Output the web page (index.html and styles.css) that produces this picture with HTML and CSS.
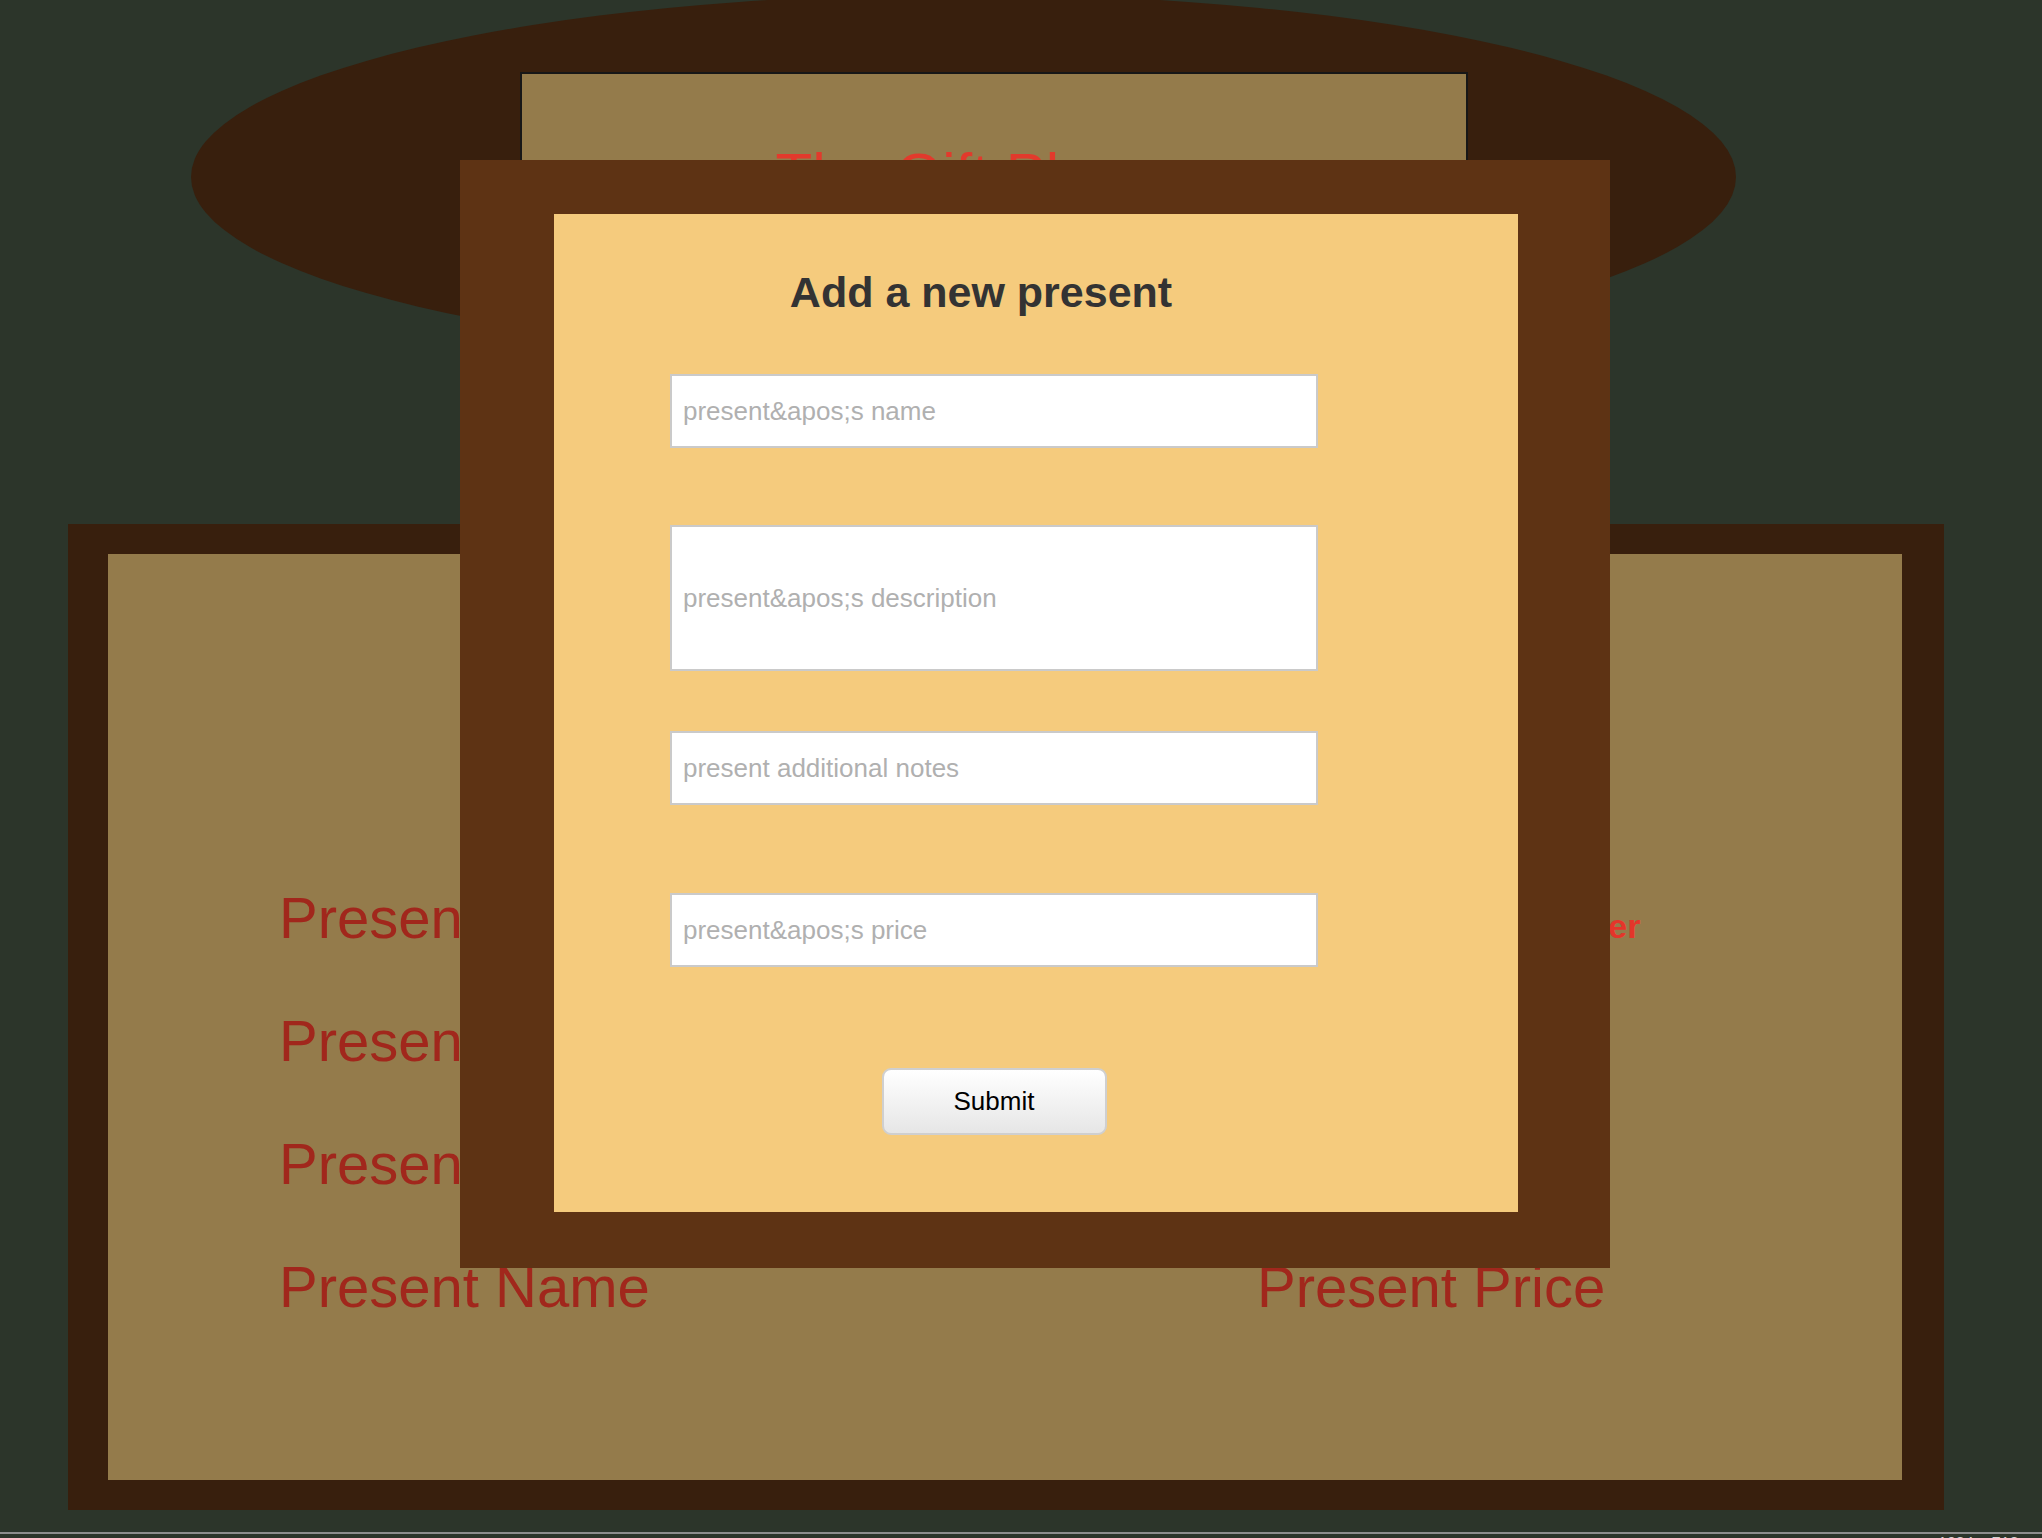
FILE: index.html
```html
<!DOCTYPE html>
<html lang="en">
<head>
<meta charset="utf-8">
<title>Presents</title>
<link rel="stylesheet" href="styles.css">
</head>
<body>
<div class="page">
  <header class="hero">
    <div class="header-box">
      <h1 class="site-title">The Gift Planner</h1>
    </div>
  </header>

  <main class="list-box">
    <div class="list-row">
      <span class="cell-name">Present Name</span>
      <span class="cell-price"></span>
      <span class="cell-action">Reorder</span>
    </div>
    <div class="list-row">
      <span class="cell-name">Present Name</span>
      <span class="cell-price">Present Price</span>
    </div>
    <div class="list-row">
      <span class="cell-name">Present Name</span>
      <span class="cell-price">Present Price</span>
    </div>
    <div class="list-row">
      <span class="cell-name">Present Name</span>
      <span class="cell-price">Present Price</span>
    </div>
  </main>

  <footer class="status-bar">
    <span class="status-text">1934 × 718</span>
  </footer>

  <div class="modal">
    <div class="modal-inner">
      <h2 class="modal-title">Add a new present</h2>
      <form class="present-form">
        <input class="field field-name" type="text" placeholder="present&amp;apos;s name">
        <input class="field field-desc" type="text" placeholder="present&amp;apos;s description">
        <input class="field field-notes" type="text" placeholder="present additional notes">
        <input class="field field-price" type="text" placeholder="present&amp;apos;s price">
        <button class="submit-btn" type="button">Submit</button>
      </form>
    </div>
  </div>
</div>
</body>
</html>
```

FILE: styles.css
```css
html, body {
  margin: 0;
  padding: 0;
  height: 1538px;
  overflow: hidden;
  background: #2c352a;
  font-family: "Liberation Sans", Arial, Helvetica, sans-serif;
}

.page {
  position: relative;
  display: flow-root;
  min-height: 1538px;
}

/* top ellipse header */
.hero {
  box-sizing: border-box;
  margin: -6px 0 0 191px;
  width: 1545px;
  height: 366px;
  padding: 78px 0 0 329px;
  border-radius: 50%;
  background: #381f0d;
}

.header-box {
  box-sizing: border-box;
  width: 948px;
  height: 280px;
  padding-top: 71px;
  background: #947b4b;
  border: 2px solid #171717;
  border-bottom: none;
}

.site-title {
  margin: 0;
  font-size: 60px;
  line-height: 60px;
  font-weight: normal;
  text-align: center;
  color: #e23a2c;
}

/* lower list box */
.list-box {
  box-sizing: border-box;
  margin: 164px 0 0 68px;
  width: 1876px;
  height: 986px;
  border-style: solid;
  border-color: #381f0d;
  border-width: 30px 42px 30px 40px;
  background: #947b4b;
  padding: 329px 0 0 171px;
  display: flex;
  flex-direction: column;
  gap: 53px;
}

.list-row {
  display: grid;
  grid-template-columns: 978px 253px auto;
  align-items: baseline;
  height: 70px;
  font-size: 58px;
  line-height: 70px;
  color: #a1271c;
  white-space: nowrap;
}

.cell-action {
  font-size: 34px;
  line-height: 40px;
  font-weight: bold;
  color: #e4352a;
}

/* bottom status line */
.status-bar {
  margin-top: 22px;
  border-top: 2px solid #8d8d8d;
  padding: 1px 0 0 1938px;
  font-size: 16px;
  line-height: 18px;
  color: #d0d0d0;
}

/* modal overlay */
.modal {
  position: absolute;
  left: 460px;
  top: 160px;
  width: 1150px;
  height: 1108px;
  box-sizing: border-box;
  padding: 54px 92px 56px 94px;
  background: #5e3314;
}

.modal-inner {
  box-sizing: border-box;
  height: 100%;
  padding: 53px 0 0 116px;
  background: #f5cb7d;
}

.modal-title {
  margin: 0;
  width: 622px;
  font-size: 43px;
  line-height: 50px;
  font-weight: bold;
  text-align: center;
  color: #333333;
}

.present-form {
  width: 648px;
  display: flex;
  flex-direction: column;
  align-items: center;
}

.field {
  box-sizing: border-box;
  width: 648px;
  height: 74px;
  margin: 0;
  padding: 0 11px;
  border: 2px solid #cacaca;
  border-radius: 0;
  background: #ffffff;
  font-family: "Liberation Sans", Arial, Helvetica, sans-serif;
  font-size: 26px;
  color: #333;
  outline: none;
}

.field::placeholder {
  color: #b0b0b0;
  opacity: 1;
}

.field-name { margin-top: 57px; }
.field-desc { margin-top: 77px; height: 146px; }
.field-notes { margin-top: 60px; }
.field-price { margin-top: 88px; }

.submit-btn {
  margin-top: 101px;
  box-sizing: border-box;
  width: 225px;
  height: 67px;
  border: 2px solid #cfcfcf;
  border-radius: 9px;
  background: linear-gradient(to bottom, #ffffff, #e6e6e6);
  font-family: "Liberation Sans", Arial, Helvetica, sans-serif;
  font-size: 26px;
  color: #000000;
  cursor: pointer;
}
```
